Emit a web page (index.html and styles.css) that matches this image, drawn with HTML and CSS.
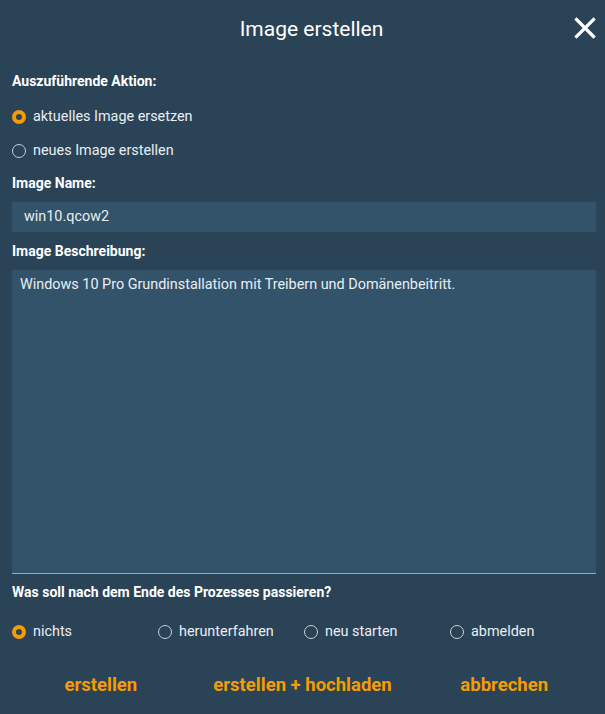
FILE: index.html
```html
<!DOCTYPE html>
<html lang="de">
<head>
<meta charset="utf-8">
<link rel="stylesheet" href="styles.css">
</head>
<body>
<div class="dialog">
  <header class="head">
    <h1 class="title">Image erstellen</h1>
    <button class="close" aria-label="Schließen">
      <svg width="22" height="22" viewBox="0 0 22 22"><path d="M2.5 2.5 L19.5 19.5 M19.5 2.5 L2.5 19.5" stroke="#fff" stroke-width="3.2" stroke-linecap="square"/></svg>
    </button>
  </header>
  <div class="label l-action">Auszuführende Aktion:</div>
  <label class="radio r1"><span class="dot on"></span>aktuelles Image ersetzen</label>
  <label class="radio r2"><span class="dot"></span>neues Image erstellen</label>
  <div class="label l-name">Image Name:</div>
  <div class="input">win10.qcow2</div>
  <div class="label l-desc">Image Beschreibung:</div>
  <div class="textarea">Windows 10 Pro Grundinstallation mit Treibern und Domänenbeitritt.</div>
  <div class="label l-after">Was soll nach dem Ende des Prozesses passieren?</div>
  <div class="options">
    <label class="radio"><span class="dot on"></span>nichts</label>
    <label class="radio"><span class="dot"></span>herunterfahren</label>
    <label class="radio"><span class="dot"></span>neu starten</label>
    <label class="radio"><span class="dot"></span>abmelden</label>
  </div>
  <div class="actions">
    <button class="btn">erstellen</button>
    <button class="btn">erstellen + hochladen</button>
    <button class="btn">abbrechen</button>
  </div>
</div>
</body>
</html>
```
FILE: styles.css
```css
html, body {
  margin: 0;
  padding: 0;
  background: #2a4357;
}
body {
  font-family: Roboto, "Noto Sans", sans-serif;
  color: #e9eef2;
  width: 605px;
  height: 714px;
  overflow: hidden;
}
.dialog {
  display: flex;
  flex-direction: column;
  padding: 0 9px 0 12px;
  height: 714px;
  box-sizing: border-box;
}
.head {
  position: relative;
  height: 58px;
  display: flex;
  align-items: center;
  justify-content: center;
  padding-left: 18px;
  margin: 0 -9px 0 -12px;
}
.title {
  margin: 0;
  font-weight: 400;
  font-size: 21px;
  color: #fff;
}
.close {
  position: absolute;
  right: 9px;
  top: 17px;
  background: none;
  border: 0;
  padding: 0;
  width: 22px;
  height: 22px;
  display: block;
}
.close svg { display: block; }
.label {
  font-weight: 700;
  font-size: 14px;
  color: #fff;
  line-height: 16px;
}
.l-action { margin-top: 15px; }
.radio {
  display: flex;
  align-items: center;
  font-size: 14.4px;
  line-height: 18px;
  color: #e9eef2;
}
.r1 { margin-top: 19px; }
.r2 { margin-top: 16px; }
.dot {
  width: 14px;
  height: 14px;
  box-sizing: border-box;
  border-radius: 50%;
  border: 1.5px solid #c9cfd4;
  margin-right: 7px;
  flex: none;
}
.dot.on {
  border: 4.5px solid #f59c00;
  background: #2a4357;
}
.l-name { margin-top: 15px; }
.input {
  margin-top: 11px;
  height: 30px;
  background: #33536a;
  font-size: 14.4px;
  line-height: 30px;
  padding-left: 12px;
  color: #e9eef2;
}
.l-desc { margin-top: 11px; }
.textarea {
  margin-top: 11px;
  background: #33536a;
  border-bottom: 1px solid #f59c00;
  font-size: 14.4px;
  line-height: 18px;
  padding: 6px 8px;
  box-sizing: border-box;
  height: 304px;
}
.l-after { margin-top: 10px; }
.options {
  margin-top: 23px;
  display: grid;
  grid-template-columns: 146px 146px 146px 146px;
}
.actions {
  margin: 33px -9px 0 -12px;
  display: grid;
  grid-template-columns: 1fr 1fr 1fr;
}
.btn {
  background: none;
  border: 0;
  font-family: Roboto, "Noto Sans", sans-serif;
  font-weight: 700;
  font-size: 18.5px;
  color: #f59c00;
  padding: 0;
  line-height: 22px;
  text-align: center;
}
```
